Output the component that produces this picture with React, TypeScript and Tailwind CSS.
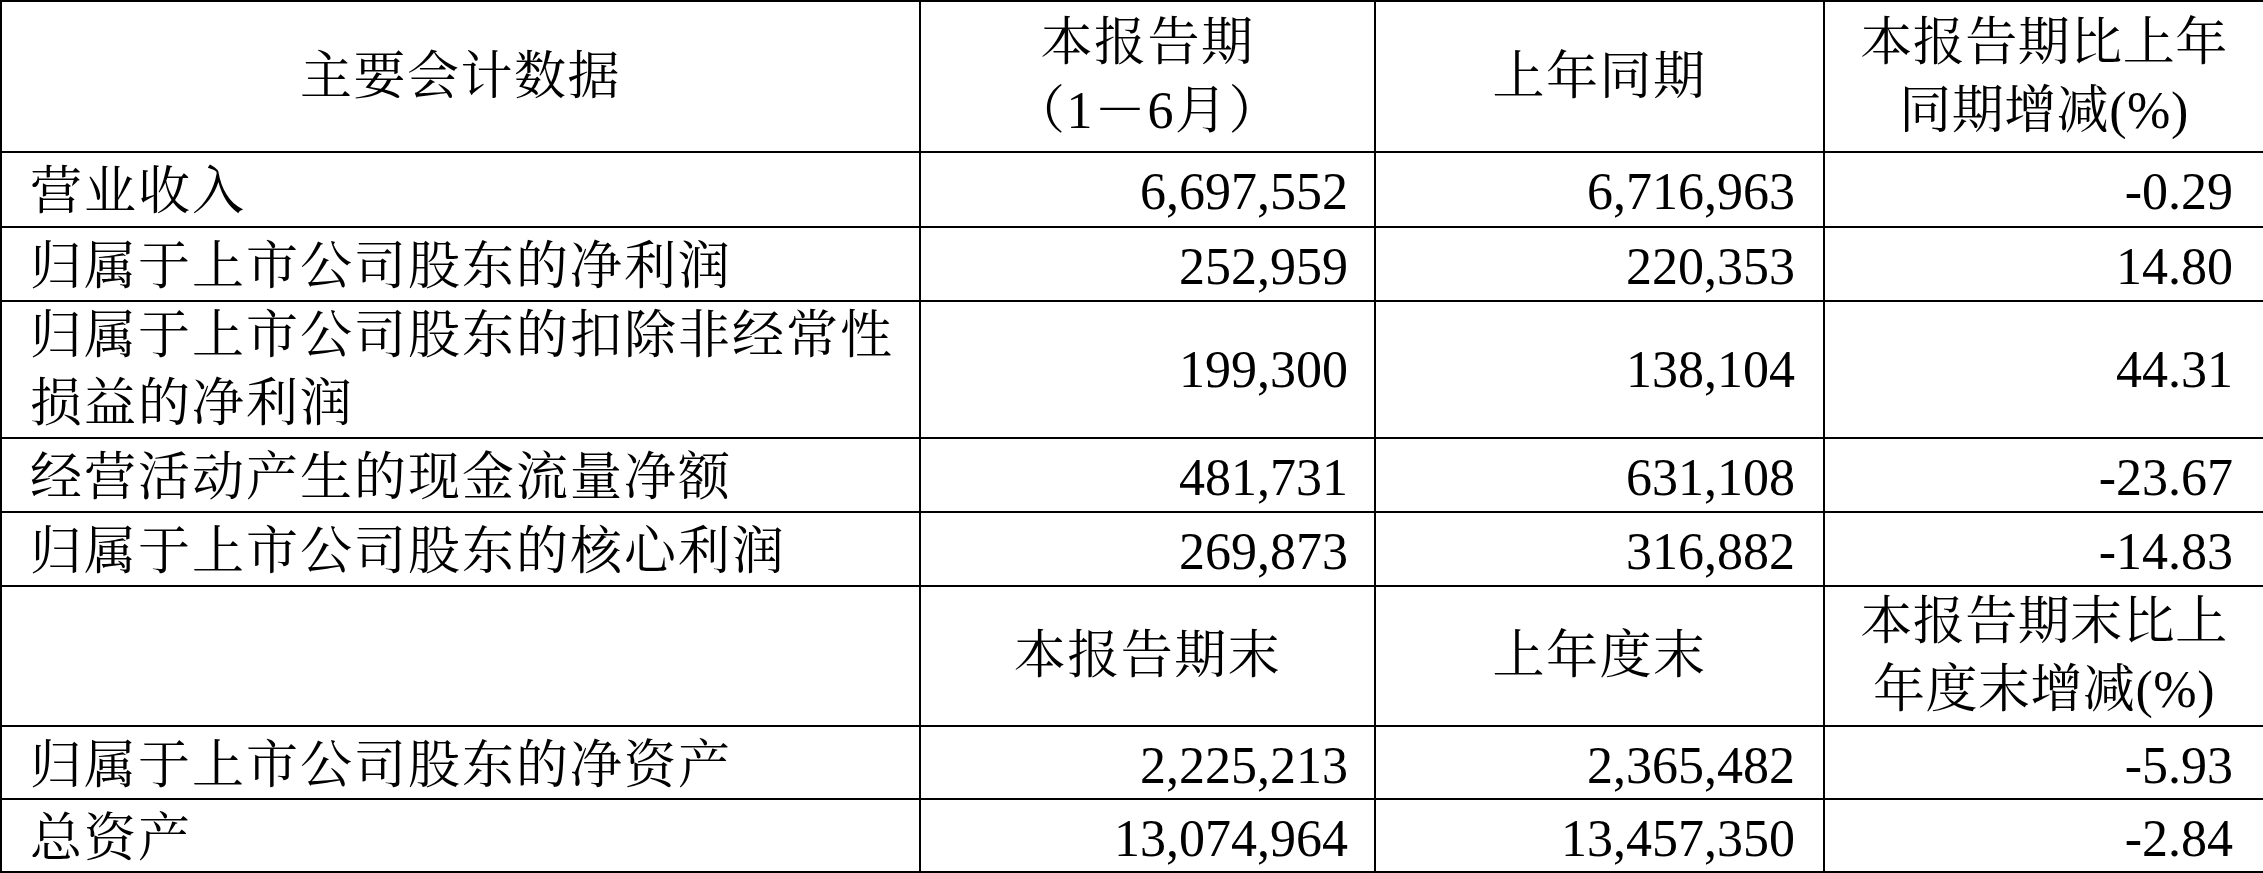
import React from "react";

type Row = {
  label: React.ReactNode;
  a: string;
  b: string;
  c: string;
  h: string;
};

const font = {
  fontFamily:
    '"Liberation Serif", "Noto Serif CJK SC", "Noto Sans CJK SC", serif',
};

function HeaderRow({
  first,
  a,
  b,
  c,
  h,
}: {
  first: React.ReactNode;
  a: React.ReactNode;
  b: React.ReactNode;
  c: React.ReactNode;
  h: string;
}) {
  return (
    <div className={`grid grid-cols-[919px_455px_449px_1fr] border-b-2 border-black ${h}`}>
      <div className="flex items-center justify-center border-r-2 border-black text-center leading-[68px]">
        {first}
      </div>
      <div className="flex items-center justify-center border-r-2 border-black text-center leading-[68px]">
        {a}
      </div>
      <div className="flex items-center justify-center border-r-2 border-black text-center leading-[68px]">
        {b}
      </div>
      <div className="flex items-center justify-center text-center leading-[68px]">{c}</div>
    </div>
  );
}

function DataRow({ row }: { row: Row }) {
  return (
    <div className={`grid grid-cols-[919px_455px_449px_1fr] border-b-2 border-black ${row.h}`}>
      <div className="flex items-center border-r-2 border-black pl-[28px] leading-[68px] tracking-[2px]">
        {row.label}
      </div>
      <div className="flex items-center justify-end border-r-2 border-black pr-[26px]">
        {row.a}
      </div>
      <div className="flex items-center justify-end border-r-2 border-black pr-[28px]">
        {row.b}
      </div>
      <div className="flex items-center justify-end pr-[30px]">{row.c}</div>
    </div>
  );
}

const rowsA: Row[] = [
  { label: "营业收入", a: "6,697,552", b: "6,716,963", c: "-0.29", h: "h-[75px]" },
  { label: "归属于上市公司股东的净利润", a: "252,959", b: "220,353", c: "14.80", h: "h-[74px]" },
  {
    label: (
      <span>
        归属于上市公司股东的扣除非经常性
        <br />
        损益的净利润
      </span>
    ),
    a: "199,300",
    b: "138,104",
    c: "44.31",
    h: "h-[137px]",
  },
  { label: "经营活动产生的现金流量净额", a: "481,731", b: "631,108", c: "-23.67", h: "h-[74px]" },
  { label: "归属于上市公司股东的核心利润", a: "269,873", b: "316,882", c: "-14.83", h: "h-[74px]" },
];

const rowsB: Row[] = [
  { label: "归属于上市公司股东的净资产", a: "2,225,213", b: "2,365,482", c: "-5.93", h: "h-[73px]" },
  { label: "总资产", a: "13,074,964", b: "13,457,350", c: "-2.84", h: "h-[73px]" },
];

export default function App() {
  return (
    <div className="w-[2263px] h-[873px] overflow-hidden bg-white">
      <div
        className="flex w-[2263px] flex-col border-l-2 border-t-2 border-black text-[52px] text-black"
        style={font}
      >
        <HeaderRow
          h="h-[151px]"
          first={<span className="tracking-[1.5px]">主要会计数据</span>}
          a={
            <span className="tracking-[1.5px]">
              本报告期
              <br />
              （1－6月）
            </span>
          }
          b={<span className="tracking-[1.5px]">上年同期</span>}
          c={
            <span className="tracking-[0.5px]">
              本报告期比上年
              <br />
              同期增减(%)
            </span>
          }
        />
        {rowsA.map((r, i) => (
          <DataRow key={i} row={r} />
        ))}
        <HeaderRow
          h="h-[140px]"
          first={<span />}
          a={<span className="tracking-[1.5px]">本报告期末</span>}
          b={<span className="tracking-[1.5px]">上年度末</span>}
          c={
            <span className="tracking-[0.5px]">
              本报告期末比上
              <br />
              年度末增减(%)
            </span>
          }
        />
        {rowsB.map((r, i) => (
          <DataRow key={i} row={r} />
        ))}
      </div>
    </div>
  );
}
